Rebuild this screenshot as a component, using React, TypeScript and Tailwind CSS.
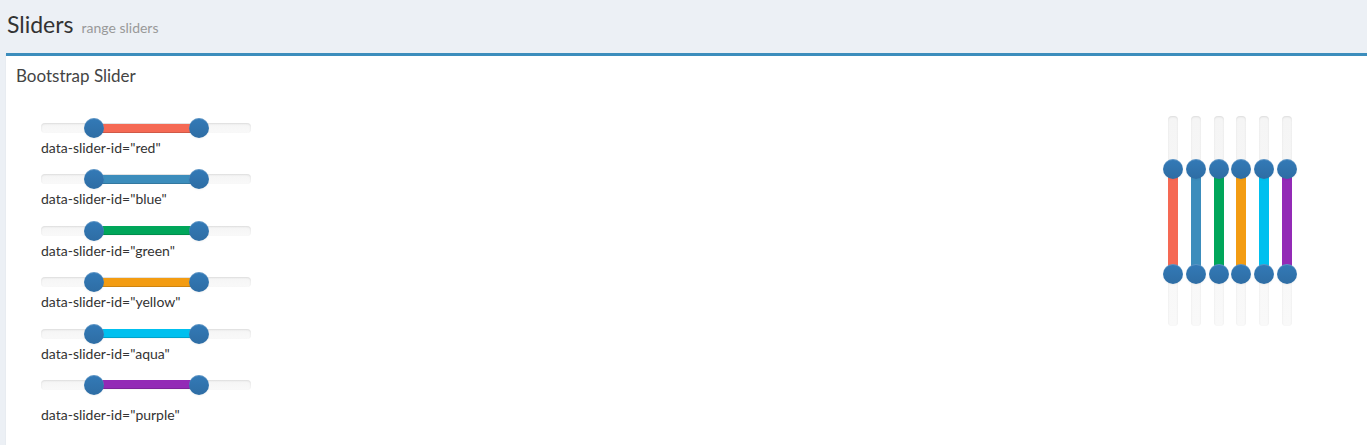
const sliders = [
  { id: 'red', color: 'bg-[#f56954]' },
  { id: 'blue', color: 'bg-[#3c8dbc]' },
  { id: 'green', color: 'bg-[#00a65a]' },
  { id: 'yellow', color: 'bg-[#f39c12]' },
  { id: 'aqua', color: 'bg-[#00c0ef]' },
  { id: 'purple', color: 'bg-[#932ab6]' },
];

const Handle = () => (
  <div className="w-5 h-5 rounded-full bg-linear-to-b from-[#337ab7] to-[#2e6da4] shadow-[inset_0_1px_0_rgba(255,255,255,0.2),0_1px_2px_rgba(0,0,0,0.05)]" />
);

const HSlider = ({ color }: { color: string }) => (
  <div className="relative w-[210px] h-5 flex items-center">
    <div className="w-full h-[10px] rounded bg-linear-to-b from-[#f5f5f5] to-[#f9f9f9] shadow-[inset_0_1px_2px_rgba(0,0,0,0.1)] flex items-center">
      <div className="w-[53px]" />
      <div className={`w-[105px] h-[9px] ${color} shadow-[inset_0_-1px_0_rgba(0,0,0,0.15)]`} />
    </div>
    {/* handles */}
    <div className="absolute left-[43px] top-0"><Handle /></div>
    <div className="absolute left-[148px] top-0"><Handle /></div>
  </div>
);

const VSlider = ({ color }: { color: string }) => (
  <div className="relative w-5 h-[210px] flex justify-center">
    <div className="h-full w-[10px] rounded bg-linear-to-b from-[#f5f5f5] to-[#f9f9f9] shadow-[inset_0_1px_2px_rgba(0,0,0,0.1)] flex flex-col items-center">
      <div className="h-[53px]" />
      <div className={`h-[105px] w-[10px] ${color}`} />
    </div>
    <div className="absolute top-[43px] left-0"><Handle /></div>
    <div className="absolute top-[148px] left-0"><Handle /></div>
  </div>
);

export default function App() {
  return (
    <div className="w-[1367px] h-[445px] bg-[#ecf0f5] overflow-hidden font-['Lato',sans-serif] text-[#333]">
      {/* page header */}
      <div className="h-[53px] pl-[7px] pt-[11px] flex items-baseline gap-[8px]">
        <h1 className="text-[23px] leading-[26px] text-[#333]">Sliders</h1>
        <span className="text-[14px] text-[#999]">range sliders</span>
      </div>

      {/* box */}
      <div className="ml-[6px] w-[1361px] h-[392px] bg-white border-t-[3px] border-[#3c8dbc] shadow-[0_1px_1px_rgba(0,0,0,0.1)]">
        <div className="px-[10px] pt-[9px] h-[40px]">
          <h3 className="text-[17px] leading-[22px] text-[#444]">Bootstrap Slider</h3>
        </div>
        <div className="flex">
          <div className="pl-[35px] pt-[22px] w-[600px]">
            {sliders.map((s, i) => (
              <div key={s.id} className={i === sliders.length - 1 ? '' : 'h-[51.4px]'}>
                <HSlider color={s.color} />
                <p className={`text-[14px] leading-[20px] text-[#333] ${i === sliders.length - 1 ? 'mt-[10px]' : ''}`}>
                  data-slider-id="{s.id}"
                </p>
              </div>
            ))}
          </div>
          <div className="flex-1" />
          <div className="pt-[20px] mr-[70px] flex gap-[2.8px]">
            {sliders.map((s) => (
              <VSlider key={s.id} color={s.color} />
            ))}
          </div>
        </div>
      </div>
    </div>
  );
}
